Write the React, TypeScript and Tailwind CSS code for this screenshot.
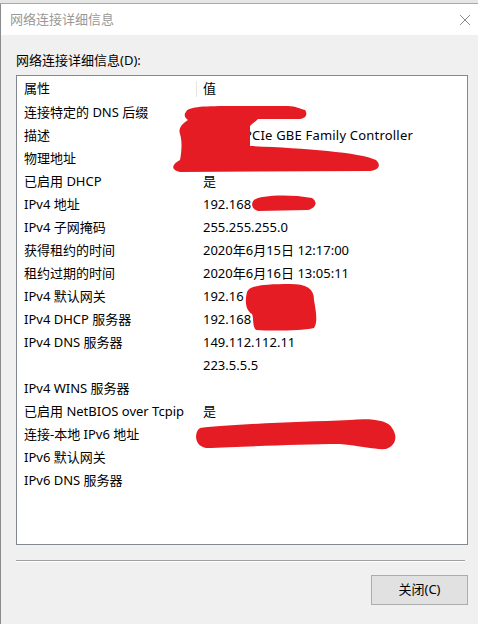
const rows: [string, string][] = [
  ['连接特定的 DNS 后缀', ''],
  ['描述', ''],
  ['物理地址', ''],
  ['已启用 DHCP', '是'],
  ['IPv4 地址', '192.168'],
  ['IPv4 子网掩码', '255.255.255.0'],
  ['获得租约的时间', '2020年6月15日 12:17:00'],
  ['租约过期的时间', '2020年6月16日 13:05:11'],
  ['IPv4 默认网关', '192.16'],
  ['IPv4 DHCP 服务器', '192.168'],
  ['IPv4 DNS 服务器', '149.112.112.11'],
  ['', '223.5.5.5'],
  ['IPv4 WINS 服务器', ''],
  ['已启用 NetBIOS over Tcpip', '是'],
  ['连接-本地 IPv6 地址', ''],
  ['IPv6 默认网关', ''],
  ['IPv6 DNS 服务器', ''],
]

function Scribbles() {
  // red marker strokes painted over the private values
  return (
    <svg className="absolute inset-0 pointer-events-none" width="478" height="624" viewBox="0 0 478 624">
      <g fill="#e51c23">
        <path d="M186,112 C188,107 200,106 230,106 L288,106 C296,106 300,109 305,110 C308,114 306,118 300,119 L258,119 C255,122 252,124 250,126 L250,146 C300,148 360,152 376,160 C382,166 378,170 370,171 L180,172 C170,170 172,164 180,160 C182,150 182,140 180,134 C178,128 182,124 188,120 C184,117 184,114 186,112 Z" />
        <path d="M254,200 C260,195 290,194 312,198 C318,202 316,208 308,210 L258,211 C251,209 251,203 254,200 Z" />
        <path d="M247,292 C249,286 262,284 290,284 C306,284 314,288 314,300 C316,312 318,322 314,328 C300,331 270,331 256,330 C252,326 254,318 252,314 C245,310 245,300 247,292 Z" />
        <path d="M200,428 C230,424 300,422 350,420 C370,418 388,420 392,428 C398,436 396,446 386,449 C376,450 362,446 340,444 C300,444 240,447 206,448 C194,446 194,432 200,428 Z" />
      </g>
    </svg>
  )
}

export default function App() {
  return (
    <div className="relative w-[478px] h-[624px] overflow-hidden bg-[#f0f0f0] text-[13px] text-black font-['Noto_Sans','Noto_Sans_CJK_SC',sans-serif]">
      <div className="h-[4px] bg-[#e6e6e6] border-b border-[#a9a9a9]" />
      <div className="flex flex-col h-[620px] border-l border-[#8c8c8c]">
        <div className="flex items-center justify-between h-[31px] bg-white pl-[9px] pr-[6px]">
          <span className="text-[#999999]">网络连接详细信息</span>
          <svg width="12" height="12" viewBox="0 0 12 12" className="mr-[1px]">
            <path d="M1,1 L11,11 M11,1 L1,11" stroke="#8a8a8a" strokeWidth="1" fill="none" />
          </svg>
        </div>

        <div className="flex flex-col pl-[15px] pr-[10px] pt-[16px]">
          <div className="h-[19px] leading-[19px] mb-[5px]">网络连接详细信息(D):</div>

          <div className="h-[470px] bg-white border border-[#828790]">
            <div className="flex h-[25px] items-center">
              <div className="w-[179px] pl-[7px]">属性</div>
              <div className="w-px h-[16px] bg-[#e5e5e5]" />
              <div className="pl-[6px]">值</div>
            </div>
            {rows.map(([k, v], i) => (
              <div key={i} className="flex h-[23px] items-center whitespace-nowrap">
                <div className="w-[180px] pl-[7px]">{k}</div>
                <div className="pl-[6px] overflow-hidden">
                  {i === 1 ? <span className="pl-[41px] tracking-[0.2px]">PCIe GBE Family Controller</span> : v}
                </div>
              </div>
            ))}
          </div>

          <div className="mt-[15px] mr-[3px] border-t border-[#a0a0a0] border-b border-b-white" />

          <div className="flex justify-end mt-[13px]">
            <button className="w-[97px] h-[30px] bg-[#e1e1e1] border border-[#adadad] text-black">关闭(C)</button>
          </div>
        </div>
      </div>
      <Scribbles />
    </div>
  )
}
